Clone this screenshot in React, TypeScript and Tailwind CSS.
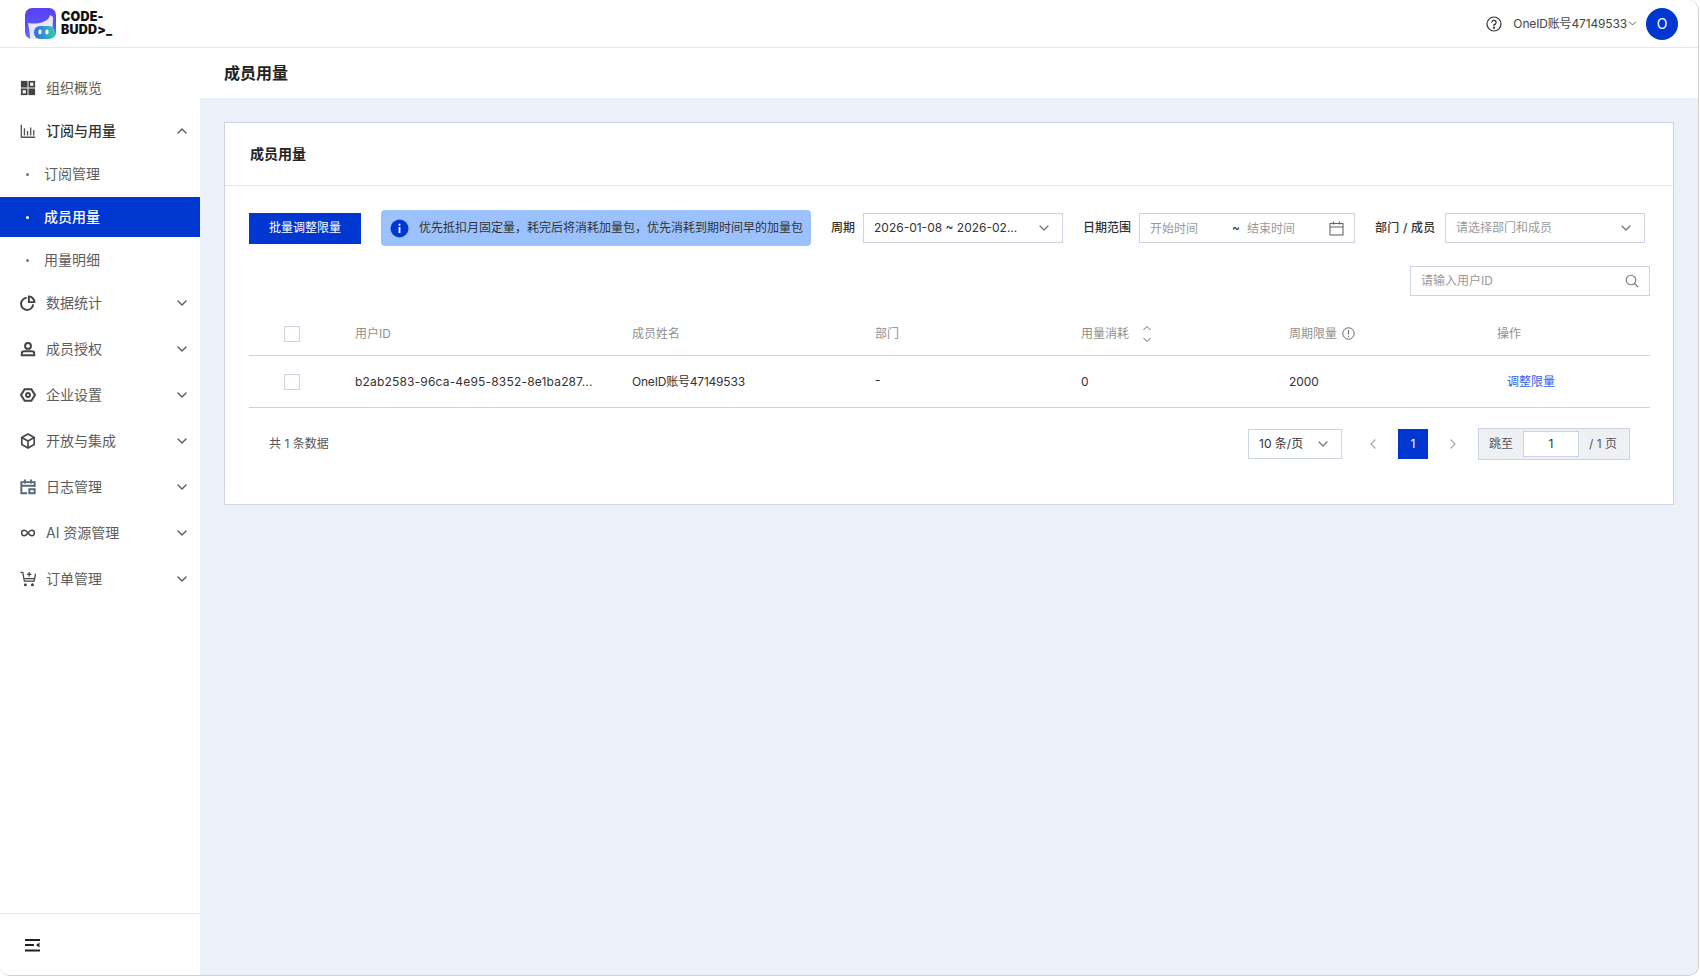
import React from "react";

const font = { fontFamily: '"Inter","Noto Sans CJK SC","Noto Sans",sans-serif' };

function Chevron({ up = false, className = "" }: { up?: boolean; className?: string }) {
  return (
    <svg width="12" height="12" viewBox="0 0 12 12" fill="none" className={className}>
      <path d={up ? "M2 8l4-4 4 4" : "M2 4l4 4 4-4"} stroke="currentColor" strokeWidth="1.3" strokeLinecap="round" strokeLinejoin="round" />
    </svg>
  );
}

const icons: Record<string, React.ReactNode> = {
  grid: (
    <g fill="none" stroke="#444" strokeWidth="2">
      <rect x="2" y="2" width="5.5" height="5.5" fill="#444" />
      <rect x="10.5" y="2" width="5.5" height="5.5" />
      <rect x="2" y="10.5" width="5.5" height="5.5" />
      <rect x="10.5" y="10.5" width="5.5" height="5.5" fill="#444" />
    </g>
  ),
  bars: <path d="M1.5 2v14h15.5M5 6v8M8.5 9v5M12 5v9M15.5 8v6" fill="none" stroke="#555" strokeWidth="1.5" />,
  pie: (
    <g fill="none" stroke="#444" strokeWidth="2.2">
      <path d="M7.5 3.2a6.8 6.8 0 1 0 7.3 7.3" />
      <path d="M10 1.8v6.2h6.2a6.2 6.2 0 0 0-6.2-6.2z" fill="none" />
    </g>
  ),
  user: (
    <g fill="none" stroke="#444" strokeWidth="2.2">
      <circle cx="9" cy="5.5" r="3.3" />
      <path d="M2 16v-2c0-1.5 1.2-2.4 2.8-2.4h8.4c1.6 0 2.8.9 2.8 2.4v2z" />
    </g>
  ),
  hex: (
    <g fill="none" stroke="#444" strokeWidth="2.2">
      <path d="M5.2 2.5h7.6L16.8 9l-4 6.5H5.2L1.2 9z" />
      <circle cx="9" cy="9" r="2.2" />
    </g>
  ),
  box: (
    <g fill="none" stroke="#444" strokeWidth="1.8" strokeLinejoin="round">
      <path d="M9 1.2l7 3.9v7.8l-7 3.9-7-3.9V5.1z" />
      <path d="M2 5.1L9 9l7-3.9M9 9v7.8" />
    </g>
  ),
  cal: (
    <g fill="none" stroke="#56687a" strokeWidth="2.2">
      <path d="M8 16H1.5V3.5h15v5.5" />
      <path d="M1.5 7.5h15M5.5 0.5V5M12.5 0.5V5" />
      <rect x="10.5" y="11.5" width="6" height="4.5" />
    </g>
  ),
  inf: <path d="M9 9c-1.4-1.9-2.6-3-4.2-3a3 3 0 0 0 0 6c1.6 0 2.8-1.1 4.2-3s2.6-3 4.2-3a3 3 0 0 1 0 6c-1.6 0-2.8-1.1-4.2-3z" fill="none" stroke="#444" strokeWidth="1.6" />,
  cart: (
    <g fill="none" stroke="#444" strokeWidth="1.4">
      <path d="M0.5 1.5h2.6l1.8 10h11L17.5 3" />
      <path d="M5 8.5h11.5M10.3 1v5.5M7.8 3.8h5" />
      <circle cx="6" cy="15.5" r="1" fill="#444" />
      <circle cx="14" cy="15.5" r="1" fill="#444" />
    </g>
  ),
};

function MenuIcon({ name }: { name: string }) {
  return (
    <svg width="16" height="16" viewBox="0 0 18 18" className="shrink-0">
      {icons[name]}
    </svg>
  );
}

function MenuGroup({ icon, label, open = false, noArrow = false, h = "h-[46px]" }: { icon: string; label: string; open?: boolean; noArrow?: boolean; h?: string }) {
  return (
    <div className={`flex items-center pl-[20px] pr-[12px] text-[14px] ${h} ${open ? "text-[#333]" : "text-[#5c5c5c]"}`}>
      <MenuIcon name={icon} />
      <span className={`ml-[10px] flex-1 pb-[2px] ${open ? "font-medium" : ""}`}>{label}</span>
      {!noArrow && (
        <span className="text-[#555]">
          <Chevron up={open} />
        </span>
      )}
    </div>
  );
}

function SubItem({ label, active = false }: { label: string; active?: boolean }) {
  return (
    <div className={`flex items-center h-[40px] mt-[3px] pl-[26px] text-[14px] ${active ? "bg-[#0037d1] text-white font-medium" : "text-[#5c5c5c]"}`}>
      <span className={`w-[3px] h-[3px] rounded-full ${active ? "bg-white" : "bg-[#777]"}`} />
      <span className="ml-[15px] pb-[2px]">{label}</span>
    </div>
  );
}

function Logo() {
  return (
    <div className="flex items-center ml-[25px] gap-[5px]">
      <svg width="31" height="31" viewBox="0 0 31 31">
        <defs>
          <linearGradient id="lg" x1="0" y1="0" x2="0" y2="1">
            <stop offset="0" stopColor="#5b3ff5" />
            <stop offset="0.6" stopColor="#5a55f0" />
            <stop offset="1" stopColor="#4f7df0" />
          </linearGradient>
          <linearGradient id="face" x1="0" y1="0" x2="1" y2="0">
            <stop offset="0" stopColor="#3568e8" />
            <stop offset="1" stopColor="#2fd0a8" />
          </linearGradient>
        </defs>
        <rect x="0" y="0" width="31" height="31" rx="7" fill="url(#lg)" />
        <path d="M5 31C5 22 3 17 3 15c5 1 12 1 17-2 2-1 4-2 5-6 2 1 4 2 3 5l-1 19z" fill="#e8e6fb" />
        <rect x="9" y="18" width="21" height="13" rx="6" fill="url(#face)" />
        <ellipse cx="15" cy="24" rx="1.6" ry="2.4" fill="#fff" />
        <ellipse cx="22" cy="24" rx="1.6" ry="2.4" fill="#fff" />
      </svg>
      <div className="text-[12.5px] leading-[12.5px] font-black text-[#111] tracking-[0.2px]" style={{ fontFamily: '"Inter",sans-serif' }}>
        <div>CODE-</div>
        <div>BUDD&gt;_</div>
      </div>
    </div>
  );
}

function Checkbox() {
  return <span className="block w-[16px] h-[16px] border border-[#ccd4e4] bg-white" />;
}

function Select({ text, placeholder = false, w }: { text: string; placeholder?: boolean; w: string }) {
  return (
    <div className={`flex items-center h-[30px] border border-[#ccd4e4] bg-white pl-[10px] pr-[12px] text-[12px] ${w} ${placeholder ? "text-[#9a9a9a]" : "text-[#333]"}`}>
      <span className="flex-1 whitespace-nowrap overflow-hidden">{text}</span>
      <span className="text-[#777]">
        <Chevron />
      </span>
    </div>
  );
}

const cols = "grid grid-cols-[106px_277px_243px_206px_208px_208px_1fr] items-center";

export default function App() {
  return (
    <div className="w-[1700px] h-[978px] bg-white overflow-hidden" style={font}>
      <div className="h-[976px] w-[1699px] flex flex-col bg-white rounded-[10px] border-r border-b border-[#d0d0d0] overflow-hidden">
        <header className="h-[48px] shrink-0 flex items-center justify-between border-b border-[#e6e8ee] pr-[20px]">
          <Logo />
          <div className="flex items-center text-[12px] tracking-[-0.15px] text-[#444]">
            <svg width="16" height="16" viewBox="0 0 16 16" fill="none" stroke="#333" strokeWidth="1.2">
              <circle cx="8" cy="8" r="7" />
              <path d="M5.9 6.2A2.1 2.1 0 1 1 8 8.6v1.2" strokeLinecap="round" />
              <circle cx="8" cy="11.8" r="0.5" fill="#333" />
            </svg>
            <span className="ml-[11px]">OneID账号47149533</span>
            <span className="ml-[1px] text-[#555]">
              <Chevron className="w-[9px] h-[9px]" />
            </span>
            <div className="ml-[9px] w-[32px] h-[32px] rounded-full bg-[#0037d1] text-white flex items-center justify-center text-[14px]">O</div>
          </div>
        </header>
        <div className="flex flex-1 min-h-0">
          <aside className="w-[200px] shrink-0 flex flex-col bg-white">
            <div className="flex-1 pt-[17px]">
              <MenuGroup icon="grid" label="组织概览" noArrow />
              <MenuGroup icon="bars" label="订阅与用量" open h="h-[40px]" />
              <SubItem label="订阅管理" />
              <SubItem label="成员用量" active />
              <SubItem label="用量明细" />
              <MenuGroup icon="pie" label="数据统计" />
              <MenuGroup icon="user" label="成员授权" />
              <MenuGroup icon="hex" label="企业设置" />
              <MenuGroup icon="box" label="开放与集成" />
              <MenuGroup icon="cal" label="日志管理" />
              <MenuGroup icon="inf" label="AI 资源管理" />
              <MenuGroup icon="cart" label="订单管理" />
            </div>
            <div className="h-[62px] shrink-0 border-t border-[#e6e8ee] pt-[25px] pl-[25px]">
              <svg width="15" height="13" viewBox="0 0 15 13" className="block">
                <path d="M0 1h15M0 6h9M0 11.5h15" stroke="#222" strokeWidth="2" />
                <path d="M14.5 3.5v5L11 6z" fill="#222" />
              </svg>
            </div>
          </aside>
          <main className="flex-1 flex flex-col min-w-0 bg-[#ecf0f8]">
            <div className="h-[50px] shrink-0 bg-white flex items-center pl-[24px] text-[16px] font-semibold text-[#222]">成员用量</div>
            <section className="mt-[24px] ml-[24px] mr-[24px] h-[383px] bg-white border border-[#ccd4e4]">
              <div className="h-[63px] pb-[2px] border-b border-[#e3e7f0] flex items-center pl-[25px] text-[14px] font-semibold text-[#222]">成员用量</div>
              <div className="pl-[24px] pr-[23px]">
                <div className="flex items-center mt-[24px] h-[36px] text-[12px] text-[#333]">
                  <button className="w-[112px] h-[31px] bg-[#0037d1] text-white text-[12px]">批量调整限量</button>
                  <div className="ml-[20px] w-[430px] h-[36px] rounded-[4px] bg-[#9bc2ff] flex items-center pl-[9px] text-[#333]">
                    <svg width="19" height="19" viewBox="0 0 19 19" className="shrink-0">
                      <circle cx="9.5" cy="9.5" r="9" fill="#0037d1" />
                      <rect x="8.6" y="8" width="1.8" height="6" fill="#fff" />
                      <rect x="8.6" y="4.8" width="1.8" height="1.9" fill="#fff" />
                    </svg>
                    <span className="ml-[10px] whitespace-nowrap">优先抵扣月固定量，耗完后将消耗加量包，优先消耗到期时间早的加量包</span>
                  </div>
                  <span className="ml-[20px] w-[32px] whitespace-nowrap font-medium">周期</span>
                  <Select text="2026-01-08 ~ 2026-02..." w="w-[200px]" />
                  <span className="ml-[20px] w-[56px] whitespace-nowrap font-medium">日期范围</span>
                  <div className="flex items-center h-[30px] w-[216px] border border-[#ccd4e4] pl-[10px] pr-[10px] text-[#9a9a9a]">
                    <span className="w-[82px] pt-[1px]">开始时间</span>
                    <span className="text-[#333] w-[15px]">~</span>
                    <span className="flex-1 pt-[1px]">结束时间</span>
                    <svg width="15" height="15" viewBox="0 0 15 15" fill="none" stroke="#666" strokeWidth="1.1">
                      <rect x="1" y="2.5" width="13" height="11.5" />
                      <path d="M1 6h13M4.5 0.5v3M10.5 0.5v3" />
                    </svg>
                  </div>
                  <span className="ml-[20px] w-[70px] whitespace-nowrap font-medium tracking-[0.25px]">部门 / 成员</span>
                  <Select text="请选择部门和成员" placeholder w="w-[200px]" />
                </div>
                <div className="flex justify-end mt-[20px]">
                  <div className="w-[240px] h-[30px] border border-[#ccd4e4] flex items-center pl-[10px] pr-[10px] text-[12px] text-[#9a9a9a]">
                    <span className="flex-1">请输入用户ID</span>
                    <svg width="14" height="14" viewBox="0 0 14 14" fill="none" stroke="#777" strokeWidth="1.1">
                      <circle cx="6" cy="6" r="4.8" />
                      <path d="M9.5 9.5L13 13" />
                    </svg>
                  </div>
                </div>
                <div className={`${cols} h-[60px] pt-[16px] border-b border-[#ccd4e4] text-[12px] text-[#8f8f8f]`}>
                  <span className="pl-[35px]">
                    <Checkbox />
                  </span>
                  <span>用户ID</span>
                  <span>成员姓名</span>
                  <span>部门</span>
                  <span className="flex items-center">
                    用量消耗
                    <svg width="10" height="18" viewBox="0 0 10 18" fill="none" stroke="#666" strokeWidth="1" className="ml-[13px]">
                      <path d="M1.5 5L5 1.5 8.5 5M1.5 13L5 16.5 8.5 13" />
                    </svg>
                  </span>
                  <span className="flex items-center">
                    周期限量
                    <svg width="13" height="13" viewBox="0 0 13 13" fill="none" stroke="#666" strokeWidth="1" className="ml-[5px]">
                      <circle cx="6.5" cy="6.5" r="5.7" />
                      <path d="M6.5 3v4.5M6.5 8.8v1.2" />
                    </svg>
                  </span>
                  <span>操作</span>
                </div>
                <div className={`${cols} h-[52px] pt-[1px] border-b border-[#ccd4e4] text-[12px] text-[#333]`}>
                  <span className="pl-[35px]">
                    <Checkbox />
                  </span>
                  <span className="whitespace-nowrap tracking-[0.18px]">b2ab2583-96ca-4e95-8352-8e1ba287...</span>
                  <span className="tracking-[-0.2px]">OneID账号47149533</span>
                  <span className="-mt-[4px]">-</span>
                  <span>0</span>
                  <span className="tracking-[-0.1px]">2000</span>
                  <span className="pl-[10px] text-[#2f62ea]">调整限量</span>
                </div>
                <div className="flex items-center justify-between h-[35px] mt-[18px] pl-[20px] pr-[20px] text-[12px] text-[#555]">
                  <span>共 1 条数据</span>
                  <div className="flex items-center">
                    <Select text="10 条/页" w="w-[94px]" />
                    <span className="ml-[16px] w-[30px] flex justify-center text-[#aaa]">
                      <Chevron className="rotate-90" />
                    </span>
                    <span className="ml-[10px] w-[30px] h-[30px] bg-[#0037d1] text-white flex items-center justify-center">1</span>
                    <span className="ml-[10px] w-[30px] flex justify-center text-[#aaa]">
                      <Chevron className="-rotate-90" />
                    </span>
                    <div className="ml-[10px] h-[32px] w-[152px] bg-[#eff0f4] border border-[#ccd4e4] flex items-center pl-[10px] text-[#555]">
                      <span className="w-[34px]">跳至</span>
                      <span className="w-[56px] h-[26px] bg-white border border-[#ccd4e4] flex items-center justify-center text-[#333]">1</span>
                      <span className="ml-[10px] whitespace-nowrap">/ 1 页</span>
                    </div>
                  </div>
                </div>
              </div>
            </section>
          </main>
        </div>
      </div>
    </div>
  );
}
